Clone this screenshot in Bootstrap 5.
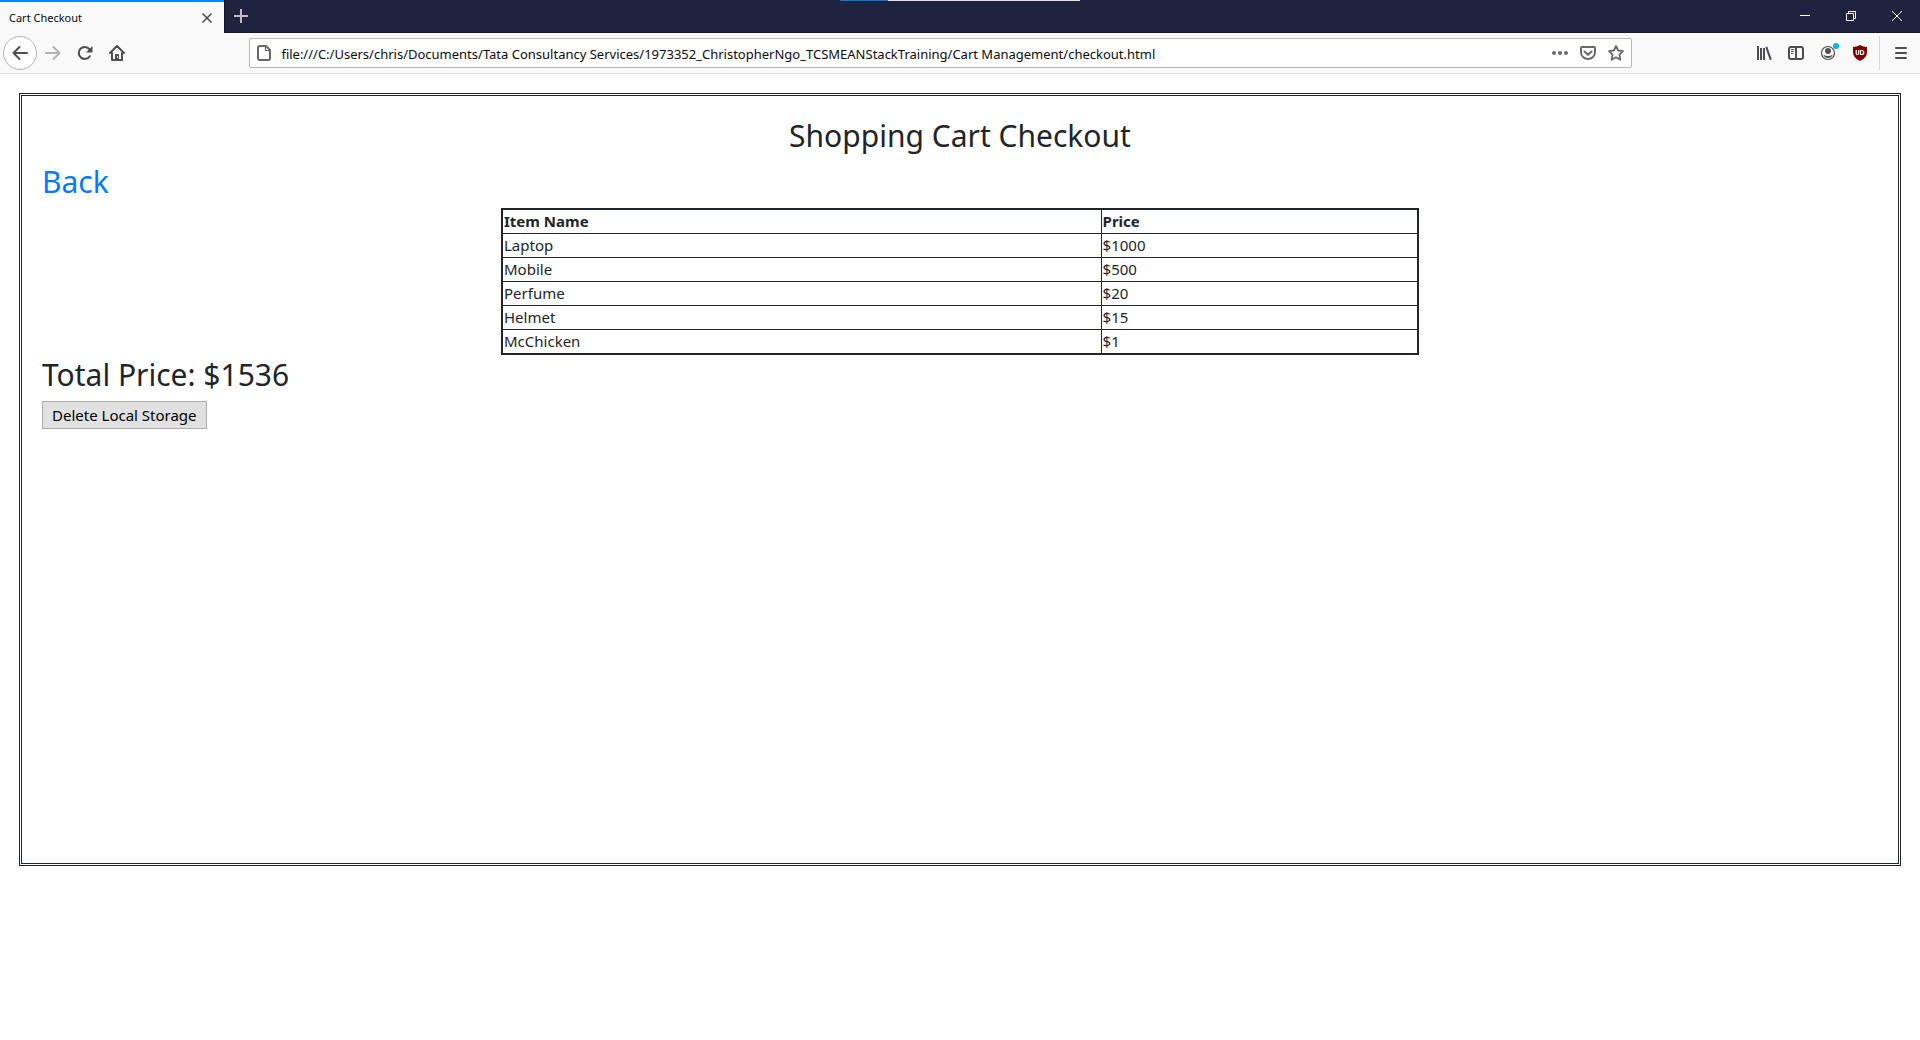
<!DOCTYPE html>
<html lang="en">
<head>
<meta charset="utf-8">
<meta name="viewport" content="width=device-width, initial-scale=1">
<title>Cart Checkout</title>
<link href="https://cdn.jsdelivr.net/npm/bootstrap@5.3.0/dist/css/bootstrap.min.css" rel="stylesheet">
<style>
  body { font-family: "Noto Sans", "Open Sans", sans-serif; font-size: 15px; line-height: 21px; color: #212529; background: #fff; }
  button { border: 0; padding: 0; background: none; }
  svg { display: block; flex: none; }
  .titlebar { height: 33px; background: #202340; border-bottom: 1px solid #14162b; }
  .tab-active { width: 224px; height: 33px; padding: 0 9px; background: #f9f9fa; border-top: 2px solid #0a84ff; color: #0c0c0d; font-size: 11px; line-height: 16px; }
  .tab-close { width: 16px; height: 16px; }
  .tab-new { width: 33px; height: 32px; border-left: 1px solid #14162b; }
  .win-btn { width: 46px; height: 32px; }
  .load-strip { top: 0; left: 50%; width: 240px; height: 1px; transform: translateX(-50%); background: #e1e1e1; }
  .load-strip span { width: 48px; background: #0078d7; }
  .toolbar { height: 41px; padding: 0 3px; background: #f9f9fa; border-bottom: 1px solid #e1e1e2; }
  .tool-btn { width: 32px; height: 32px; color: #4e4e50; flex: none; }
  .tool-back { width: 34px; height: 34px; border: 1px solid #b4b4b5; border-radius: 50%; background: #fff; color: #4e4e50; flex: none; }
  .tool-btn:disabled { color: #b3b3b4; }
  .spacer { flex: 5 1 0; }
  .urlbar { flex: 59 1 0; height: 30px; padding: 0 1px 0 6px; background: #fff; border: 1px solid #b9b9ba; border-radius: 2px; color: #68686a; }
  .urlbar input { border: 0; margin-left: 9px; padding: 2px 0 0; outline: 0; background: none; color: #0c0c0d; font-size: 13px; line-height: 20px; min-width: 0; }
  .urlbar button { width: 28px; height: 28px; color: #68686a; }
  .tool-sep { width: 1px; height: 34px; margin: 0 5px 0 3px; background: #d9d9da; }
  .checkout { margin: 19px; padding: 20px; border: 3px double #212529; min-height: calc((100vh - 74px) * .8); }
  .checkout h2 { font-size: 30px; line-height: 40px; font-weight: 400; margin-bottom: 6px; }
  .checkout h2 a { color: #007bff; text-decoration: none; }
  .cart { width: 50%; border: 2px solid #212529; border-collapse: collapse; }
  .cart th, .cart td { border: 1px solid #212529; padding: 1px; }
  .cart th:first-child { width: 65.4%; }
  .btn-wipe { height: 28px; padding: 0 9px; border: 1px solid #adadad; background: #e1e1e1; color: #000; }
</style>
<script src="https://cdn.jsdelivr.net/npm/bootstrap@5.3.0/dist/js/bootstrap.bundle.min.js"></script>
</head>
<body>
<header>
  <div class="titlebar d-flex position-relative">
    <div class="tab-active d-flex align-items-center justify-content-between">
      <span>Cart Checkout</span>
      <button class="tab-close" aria-label="Close tab"><svg width="16" height="16" fill="none" stroke="#4a4a4f" stroke-width="1.5"><path d="M3.500 3.500l9 9M12.500 3.500l-9 9"/></svg></button>
    </div>
    <button class="tab-new d-flex align-items-center justify-content-center" aria-label="New tab"><svg width="16" height="16" stroke="#bcbcc8" stroke-width="2"><path d="M1 8h14M8 1v14"/></svg></button>
    <div class="load-strip position-absolute d-flex"><span></span></div>
    <div class="d-flex ms-auto">
      <button class="win-btn d-flex align-items-center justify-content-center" aria-label="Minimize"><svg width="10" height="10" stroke="#fff"><path d="M0 4.500h10"/></svg></button>
      <button class="win-btn d-flex align-items-center justify-content-center" aria-label="Restore"><svg width="10" height="10" fill="none" stroke="#fff"><path d="M.5 2.500h7v7h-7zM2.500 2.500v-2h7v7h-2"/></svg></button>
      <button class="win-btn d-flex align-items-center justify-content-center" aria-label="Close"><svg width="10" height="10" stroke="#fff"><path d="M0 0l10 10M10 0L0 10"/></svg></button>
    </div>
  </div>
  <nav class="toolbar d-flex align-items-center" aria-label="Browser">
    <button class="tool-back d-flex align-items-center justify-content-center" aria-label="Back"><svg width="16" height="16" fill="none" stroke="currentColor" stroke-width="2" stroke-linecap="round" stroke-linejoin="round"><path d="M15 8H1.500M7.500 2l-6 6 6 6"/></svg></button>
    <button class="tool-btn d-flex align-items-center justify-content-center" aria-label="Forward" disabled><svg width="16" height="16" fill="none" stroke="currentColor" stroke-width="2" stroke-linecap="round" stroke-linejoin="round"><path d="M1 8h13.500M8.500 2l6 6-6 6"/></svg></button>
    <button class="tool-btn d-flex align-items-center justify-content-center" aria-label="Reload"><svg width="16" height="16" fill="none" stroke="currentColor" stroke-width="2" stroke-linecap="round"><path d="M12.800 11.200A6 6 0 1 1 12.300 4"/><path d="M15.500 1v6.500H9z" fill="currentColor" stroke="none"/></svg></button>
    <button class="tool-btn d-flex align-items-center justify-content-center" aria-label="Home"><svg width="16" height="16" fill="none" stroke="currentColor" stroke-width="2" stroke-linecap="round" stroke-linejoin="round"><path d="M1 8l7-7 7 7M3 8v7h10V8"/><path d="M6 15v-5q0-1 1-1h2q1 0 1 1v5z" fill="currentColor" stroke="none"/><path d="M8.500 11.500v1" stroke="#f9f9fa" stroke-width="1"/></svg></button>
    <div class="spacer"></div>
    <div class="urlbar d-flex align-items-center">
      <svg width="16" height="16" fill="none" stroke="currentColor" stroke-width="2" stroke-linejoin="round"><path d="M4 1h6l4 4v8.500q0 1.500-1.500 1.500h-8.500Q2 15 2 13V3q0-2 2-2z"/><path d="M9.500 1v4.500H14" stroke-width="1.200"/></svg>
      <input class="flex-grow-1" type="text" aria-label="Address" value="file:///C:/Users/chris/Documents/Tata Consultancy Services/1973352_ChristopherNgo_TCSMEANStackTraining/Cart Management/checkout.html">
      <button class="d-flex align-items-center justify-content-center" aria-label="Page actions"><svg width="16" height="16" fill="currentColor"><circle cx="2" cy="8" r="2"/><circle cx="8" cy="8" r="2"/><circle cx="14" cy="8" r="2"/></svg></button>
      <button class="d-flex align-items-center justify-content-center" aria-label="Save to Pocket"><svg width="16" height="16" fill="none" stroke="currentColor" stroke-width="2" stroke-linecap="round" stroke-linejoin="round"><path d="M2 2h12q1 0 1 1v4.500a7 6.500 0 0 1-14 0V3q0-1 1-1z"/><path d="M4.500 6.500L8 9.800l3.500-3.300"/></svg></button>
      <button class="d-flex align-items-center justify-content-center" aria-label="Bookmark"><svg width="16" height="16" fill="none" stroke="currentColor" stroke-width="1.800" stroke-linejoin="round"><path d="M8 1l2.100 4.500 4.900.7-3.500 3.500.8 5L8 12.300l-4.300 2.400.8-5L1 6.200l4.900-.7z"/></svg></button>
    </div>
    <div class="spacer"></div>
    <button class="tool-btn d-flex align-items-center justify-content-center" aria-label="Library"><svg width="16" height="16" fill="none" stroke="currentColor" stroke-width="2"><path d="M2 1v14M5 3v12M8 3v12"/><path d="M10.300 1.800l4.500 13"/></svg></button>
    <button class="tool-btn d-flex align-items-center justify-content-center" aria-label="Sidebars"><svg width="16" height="16" fill="none" stroke="currentColor" stroke-width="2"><rect x="1" y="2" width="14" height="12" rx="2"/><path d="M8 2v12"/><path d="M3 4.500h3M3 6.500h3M3 8.500h2" stroke-width="1"/></svg></button>
    <button class="tool-btn d-flex align-items-center justify-content-center position-relative" aria-label="Account"><svg width="24" height="24" fill="none" stroke="currentColor"><circle cx="12" cy="12" r="6.500" stroke-width="1.200"/><circle cx="12" cy="10" r="3" fill="currentColor" stroke="none"/><path d="M7.300 13.500q1.700 1.500 4.700 1.500t4.700-1.500q-1.200 3.500-4.700 3.500t-4.700-3.500z" fill="currentColor" stroke="none"/><circle cx="20" cy="5" r="3" fill="#00b3f4" stroke="none"/></svg></button>
    <button class="tool-btn d-flex align-items-center justify-content-center" aria-label="uBlock Origin"><svg width="16" height="16" fill="none"><path d="M8 0q3 2 7 2v5q0 6-7 9-7-3-7-9V2q4 0 7-2z" fill="#800000"/><path d="M4.200 5v3q0 1.500 1.200 1.500T6.700 8V5M8.500 5.500v4h1.300a2 2 0 0 0 0-4H8.500z" stroke="#fff" stroke-width="1.200"/></svg></button>
    <div class="tool-sep"></div>
    <button class="tool-btn d-flex align-items-center justify-content-center" aria-label="Menu"><svg width="12" height="12" stroke="currentColor" stroke-width="2" stroke-linecap="round"><path d="M1 1h10M1 6h10M1 11h10"/></svg></button>
  </nav>
</header>
<main class="checkout">
  <h2 class="text-center">Shopping Cart Checkout</h2>
  <h2><a href="#">Back</a></h2>
  <table class="cart mx-auto">
    <thead><tr><th scope="col">Item Name</th><th scope="col">Price</th></tr></thead>
    <tbody>
      <tr><td>Laptop</td><td>$1000</td></tr>
      <tr><td>Mobile</td><td>$500</td></tr>
      <tr><td>Perfume</td><td>$20</td></tr>
      <tr><td>Helmet</td><td>$15</td></tr>
      <tr><td>McChicken</td><td>$1</td></tr>
    </tbody>
  </table>
  <h2>Total Price: $1536</h2>
  <button class="btn-wipe" type="button">Delete Local Storage</button>
</main>
</body>
</html>
